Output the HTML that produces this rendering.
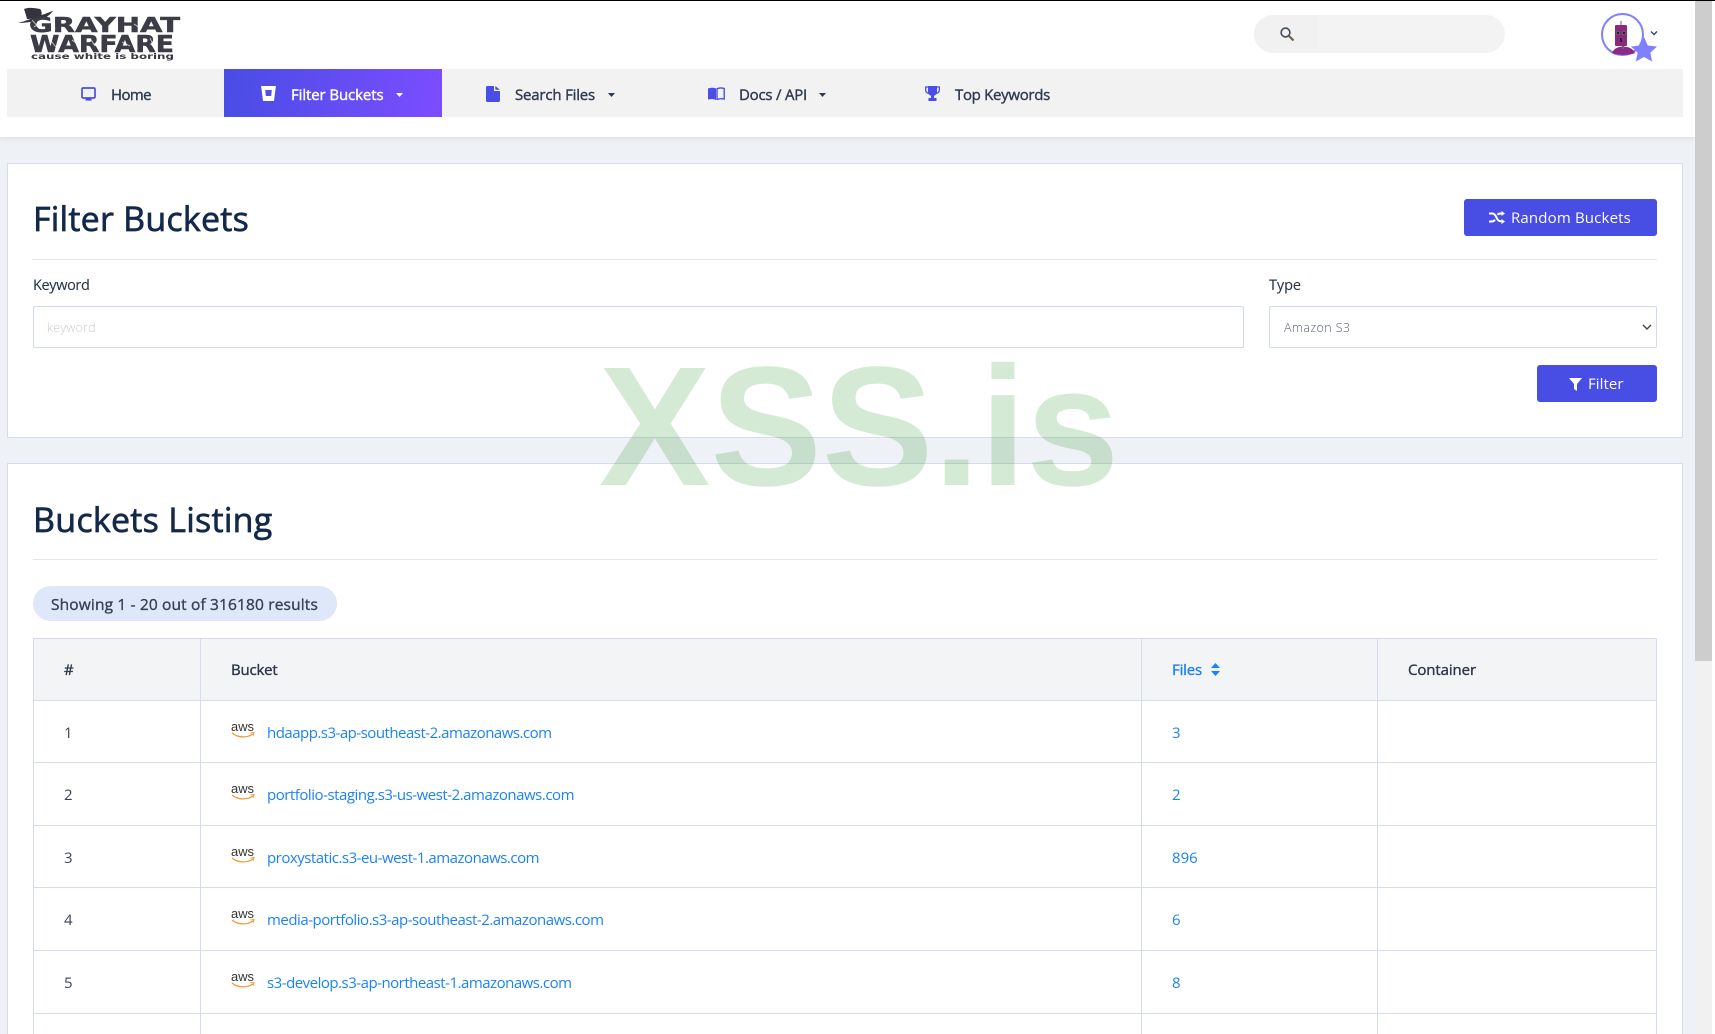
<!DOCTYPE html>
<html lang="en">
<head>
<meta charset="utf-8">
<title>Filter Buckets - GrayhatWarfare</title>
<style>
*{box-sizing:border-box}
html,body{margin:0;padding:0;width:1715px;height:1034px;overflow:hidden;background:#fff}
body{font-family:"Open Sans","Noto Sans CJK JP","Liberation Sans",sans-serif;color:#2f3a4f;position:relative}
#bg{position:absolute;left:0;top:0;width:1695px;height:1034px;background:#eef1f5}
#top{position:absolute;left:0;top:0;width:1695px;height:137px;background:#fff;box-shadow:0 1px 6px rgba(0,0,0,.09);border-top:1px solid #000}
#blk{position:absolute;left:0;top:0;width:1715px;height:1px;background:#000;z-index:5}
#track{position:absolute;left:1695px;top:0;width:17px;height:1034px;background:#f1f1f1}
#thumb{position:absolute;left:1695px;top:0;width:17px;height:661px;background:#cdcdcd}
.a{position:absolute;white-space:nowrap;line-height:20px}
#search{position:absolute;left:1254px;top:15px;width:251px;height:38px;border-radius:19px;background:#f3f3f3;overflow:hidden}
#search i{position:absolute;left:0;top:0;width:65px;height:38px;background:#f1f1f1}
#nav{position:absolute;left:7px;top:69px;width:1676px;height:48px;background:#f2f2f2}
#active{position:absolute;left:224px;top:69px;width:218px;height:48px;background:linear-gradient(100deg,#484de4,#7c4dff)}
.n{font-size:15px;color:#2f3a4f;top:85px;-webkit-text-stroke:.4px currentColor}
.card{position:absolute;left:7px;width:1676px;background:#fff;border:1px solid #d6dcea}
.h{font-size:34px;color:#14294a;line-height:40px;-webkit-text-stroke:.7px currentColor}
.rule{position:absolute;height:1px;background:#e3e6ec;left:33px;width:1624px}
.lbl{font-size:14.5px;color:#26344b;top:275.5px;-webkit-text-stroke:.1px currentColor}
.box{position:absolute;height:42px;top:306px;background:#fff;border:1px solid #d3daec;border-radius:2px;margin:0;padding:0 13px;font:300 12.5px "Open Sans","Noto Sans CJK JP",sans-serif;outline:0;color:#5a6270;appearance:none;-webkit-appearance:none}
input.box::placeholder{color:#c9ccd2;opacity:1}
.btn{position:absolute;background:#484de4;border-radius:3px;height:37px}
.bt{font-size:15px;color:#fff}
#pill{position:absolute;left:33px;top:586px;width:304px;height:35px;border-radius:18px;background:#dfe7fb}
table{position:absolute;left:33px;top:638px;width:1624px;table-layout:fixed;border-collapse:separate;border-spacing:0;border-top:1px solid #d5dcec;border-left:1px solid #d5dcec}
th,td{box-sizing:border-box;padding:0 0 0 30px;vertical-align:top;border-right:1px solid #d5dcec;border-bottom:1px solid #d5dcec;text-align:left;font-size:15px;line-height:20px;position:relative;white-space:nowrap}
th{background:#f3f4f6;font-weight:400;color:#2a3548;padding-top:21px;height:62px;-webkit-text-stroke:.35px currentColor}
td{background:#fff;padding-top:22px;color:#3a4456}
tr.h62 td{height:62px}
tr.h63 td{height:63px}
a{color:#1a82f7;text-decoration:none;display:inline-block}
td a.b{margin-left:36px;font-size:15px;margin-top:-.5px}
td svg{position:absolute;left:30px;top:21px}
#wm{position:absolute;left:599px;top:327px;font:700 170px/200px "Liberation Sans",Arial,sans-serif;color:rgba(0,128,0,.17);z-index:10;white-space:nowrap;pointer-events:none;transform:scaleX(.983);transform-origin:0 0}
svg{display:block}
.ic{position:absolute}
</style>
</head>
<body>
<div id="bg"></div>
<div id="top"></div>
<div id="blk"></div>
<div id="track"></div>
<div id="thumb"></div>

<!-- logo -->
<svg class="ic" style="left:0;top:0" width="200" height="66" viewBox="0 0 200 66">
  <path d="M18 23 C26 21 33 18 38 16 C46 14 52 11 53 11 C50 15 44 20 36 21 C30 22 24 23 18 23Z" fill="#34343e"/>
  <path d="M24 9 C29 7 35 8 40 9 C42 11 42 14 41 16 C36 18 31 19 27 19 C26 15 25 12 24 9Z" fill="#34343e"/>
  <text x="29" y="32" textLength="151" lengthAdjust="spacingAndGlyphs" font-family="'DejaVu Sans','Liberation Sans',sans-serif" font-weight="700" font-size="20.500" fill="#3c3c46" stroke="#3c3c46" stroke-width=".5">GRAYHAT</text>
  <text x="30" y="52" textLength="144" lengthAdjust="spacingAndGlyphs" font-family="'DejaVu Sans','Liberation Sans',sans-serif" font-weight="700" font-size="23" fill="#3c3c46" stroke="#3c3c46" stroke-width=".5">WARFARE</text>
  <text x="31" y="59" textLength="143" lengthAdjust="spacingAndGlyphs" font-family="'DejaVu Sans','Liberation Sans',sans-serif" font-weight="700" font-size="8" fill="#3a3a44">cause white is boring</text>
  <path d="M32 20l8 9M34 27l6-4M52 20l3 9M95 22l5 6M134 24l6 4M50 40l6 7M90 38l5 8M122 42l8 4M150 38l4 9M72 40l4 3" stroke="#fff" stroke-width=".9" opacity=".75"/>
</svg>

<div id="search"><i></i></div>
<svg class="ic" style="left:1279px;top:26px" width="16" height="16" viewBox="0 0 16 16"><circle cx="6.500" cy="6.500" r="4.400" fill="none" stroke="#444c5c" stroke-width="1.600"/><path d="M10 10l4.500 4.500" stroke="#6b5a4a" stroke-width="2"/></svg>

<!-- avatar -->
<svg class="ic" style="left:1598px;top:10px" width="70" height="56" viewBox="0 0 70 56">
  <circle cx="24.500" cy="24.500" r="20.500" fill="#fff" stroke="#8080ff" stroke-width="2"/>
  <path d="M14 43c2-5 7-6.500 11-6.500s10 1.500 12 6.500c-6 2.500-17 2.500-23 0Z" fill="#8a2a8a"/>
  <rect x="17" y="15" width="12" height="21" rx="1" fill="#8a2a7e"/>
  <path d="M23 11v4" stroke="#999" stroke-width="1.500"/>
  <path d="M25 36v3" stroke="#666" stroke-width="2"/>
  <circle cx="20" cy="23" r="1.700" fill="#222" stroke="#777" stroke-width=".7"/><circle cx="26" cy="23" r="1.700" fill="#222" stroke="#777" stroke-width=".7"/>
  <path d="M22.500 28l1 4" stroke="#111" stroke-width="1.400"/>
  <polygon points="46,27 49.800,35.500 59,36.500 52.300,42.800 54.200,51.500 46,47 37.800,51.500 39.700,42.800 33,36.500 42.200,35.500" fill="#8080ff"/>
</svg>
<svg class="ic" style="left:1650px;top:30px" width="8" height="6" viewBox="0 0 8 6"><path d="M1 1.500l3 3 3-3" fill="none" stroke="#2a4a70" stroke-width="1.400"/></svg>

<!-- nav -->
<div id="nav"></div>
<div id="active"></div>
<svg class="ic" style="left:81px;top:87px" width="15" height="14" viewBox="0 0 15 14"><rect x="1" y="1" width="13" height="10" rx="1.200" fill="none" stroke="#4a4de6" stroke-width="1.700"/><path d="M4.500 12.500h6" stroke="#4a4de6" stroke-width="2.200"/></svg>
<span class="a n" style="left:111px;--w:40">Home</span>
<svg class="ic" style="left:261px;top:86px" width="15" height="15" viewBox="0 0 15 15"><path fill-rule="evenodd" d="M0 0h15l-.5 3-1.500 12H2L.5 3ZM4.200 4l.6 6h5.400l.6-6Z" fill="#fff"/></svg>
<span class="a n" style="left:291px;--w:92.500;color:#fff">Filter Buckets</span>
<svg class="ic" style="left:396px;top:93px" width="7" height="4" viewBox="0 0 7 4"><path d="M0 0h7L3.500 4Z" fill="#fff"/></svg>
<svg class="ic" style="left:486px;top:86px" width="14" height="16" viewBox="0 0 14 16"><path d="M1.500 0H8v5h6v9.500a1.500 1.500 0 0 1-1.500 1.500h-11A1.500 1.500 0 0 1 0 14.500v-13A1.500 1.500 0 0 1 1.500 0ZM9.300 0 14 3.800H9.300Z" fill="#4a4de6"/></svg>
<span class="a n" style="left:515px;--w:80">Search Files</span>
<svg class="ic" style="left:607.500px;top:93px" width="7" height="4" viewBox="0 0 7 4"><path d="M0 0h7L3.500 4Z" fill="#2f3a4f"/></svg>
<svg class="ic" style="left:708px;top:87px" width="17" height="13" viewBox="0 0 17 13"><path d="M0 1.500C3 .500 6 .500 8 1.500V13C6 12 3 12 0 12.500Z" fill="#4a4de6"/><path d="M9 1.800C11 .800 14 .800 16.200 1.500V12C14 11.500 11 11.700 9 12.700Z" fill="none" stroke="#4a4de6" stroke-width="1.400"/></svg>
<span class="a n" style="left:739px;--w:68">Docs / API</span>
<svg class="ic" style="left:818.500px;top:93px" width="7" height="4" viewBox="0 0 7 4"><path d="M0 0h7L3.500 4Z" fill="#2f3a4f"/></svg>
<svg class="ic" style="left:925px;top:86px" width="15" height="15" viewBox="0 0 15 15"><path d="M3 0h9v6c0 2-1.500 3.300-3 3.700V12h2.500v3h-8v-3H6V9.700C4.500 9.300 3 8 3 6Z" fill="#4a4de6"/><path d="M3 1H.7v3c0 1.800 1.300 3 2.900 3.300M12 1h2.300v3c0 1.800-1.300 3-2.900 3.300" fill="none" stroke="#4a4de6" stroke-width="1.300"/></svg>
<span class="a n" style="left:955px;--w:95">Top Keywords</span>

<!-- filter card -->
<div class="card" style="top:163px;height:275px"></div>
<div class="a h" style="left:33px;top:198px;--w:216">Filter Buckets</div>
<div class="btn" style="left:1464px;top:199px;width:193px"></div>
<svg class="ic" style="left:1489px;top:211px" width="16" height="13" viewBox="0 0 16 13"><path d="M0 2.500h3c1.800 0 2.800 1 3.700 2.500l1.600 3c.8 1.400 1.600 2.200 3.200 2.200h1.500M0 10.500h3c1.500 0 2.300-.8 3-1.800M8.500 3.800c.7-.9 1.600-1.300 3-1.300h1.500" fill="none" stroke="#fff" stroke-width="2"/><path d="M12.500 0 16 2.500 12.500 5ZM12.500 8 16 10.500 12.500 13Z" fill="#fff"/></svg>
<span class="a bt" style="left:1511px;top:207.500px;--w:120">Random Buckets</span>
<div class="rule" style="top:259px"></div>
<span class="a lbl" style="left:33px;--w:56.500">Keyword</span>
<input class="box" style="left:33px;width:1211px;letter-spacing:.2px" placeholder="keyword" type="text">
<span class="a lbl" style="left:1269px;--w:32">Type</span>
<select class="box" style="left:1269px;width:388px;letter-spacing:.4px;padding-left:14px"><option>Amazon S3</option></select>
<svg class="ic" style="left:1642px;top:324px" width="10" height="7" viewBox="0 0 10 7"><path d="M1 1l4 4 4-4" fill="none" stroke="#444" stroke-width="1.400"/></svg>
<div class="btn" style="left:1537px;top:365px;width:120px"></div>
<svg class="ic" style="left:1569px;top:378px" width="13" height="13" viewBox="0 0 13 13"><path d="M0 0h13L8 6v7L5 11V6Z" fill="#fff"/></svg>
<span class="a bt" style="left:1588px;top:373.500px;--w:35.500">Filter</span>

<!-- listing card -->
<div class="card" style="top:463px;height:600px"></div>
<div class="a h" style="left:33px;top:499px;--w:239.500">Buckets Listing</div>
<div class="rule" style="top:559px"></div>
<div id="pill"></div>
<span class="a" style="left:51px;top:594px;font-size:15.500px;color:#37414f;-webkit-text-stroke:.35px currentColor;--w:267">Showing 1 - 20 out of 316180 results</span>

<table>
<colgroup><col style="width:167px"><col style="width:941px"><col style="width:236px"><col style="width:279px"></colgroup>
<tr><th>#</th><th><span class="f" style="--w:46.500">Bucket</span></th><th><a class="f" style="--w:30">Files</a><svg class="ic" style="left:69px;top:24px" width="9" height="13" viewBox="0 0 9 13"><path d="M4.500 0 9 5H0ZM0 8h9l-4.500 5Z" fill="#1a82f7"/></svg></th><th><span class="f" style="--w:68">Container</span></th></tr>
<tr class="h62"><td>1</td><td><svg width="24" height="16" viewBox="0 0 24 16"><text x="0" y="9" font-family="'Liberation Sans',sans-serif" font-size="12.500" fill="#333" textLength="23" lengthAdjust="spacingAndGlyphs">aws</text><path d="M1 11c6 5 15 5 21 1" fill="none" stroke="#ef9a3a" stroke-width="1.300"/><path d="M19.500 11l3.500-.5-1 3.200" fill="none" stroke="#ef9a3a" stroke-width="1"/></svg><a class="b" style="--w:284.500">hdaapp.s3-ap-southeast-2.amazonaws.com</a></td><td><a>3</a></td><td></td></tr>
<tr class="h63"><td>2</td><td><svg width="24" height="16" viewBox="0 0 24 16"><text x="0" y="9" font-family="'Liberation Sans',sans-serif" font-size="12.500" fill="#333" textLength="23" lengthAdjust="spacingAndGlyphs">aws</text><path d="M1 11c6 5 15 5 21 1" fill="none" stroke="#ef9a3a" stroke-width="1.300"/><path d="M19.500 11l3.500-.5-1 3.200" fill="none" stroke="#ef9a3a" stroke-width="1"/></svg><a class="b" style="--w:307">portfolio-staging.s3-us-west-2.amazonaws.com</a></td><td><a>2</a></td><td></td></tr>
<tr class="h62"><td>3</td><td><svg width="24" height="16" viewBox="0 0 24 16"><text x="0" y="9" font-family="'Liberation Sans',sans-serif" font-size="12.500" fill="#333" textLength="23" lengthAdjust="spacingAndGlyphs">aws</text><path d="M1 11c6 5 15 5 21 1" fill="none" stroke="#ef9a3a" stroke-width="1.300"/><path d="M19.500 11l3.500-.5-1 3.200" fill="none" stroke="#ef9a3a" stroke-width="1"/></svg><a class="b" style="--w:272">proxystatic.s3-eu-west-1.amazonaws.com</a></td><td><a>896</a></td><td></td></tr>
<tr class="h63"><td>4</td><td><svg width="24" height="16" viewBox="0 0 24 16"><text x="0" y="9" font-family="'Liberation Sans',sans-serif" font-size="12.500" fill="#333" textLength="23" lengthAdjust="spacingAndGlyphs">aws</text><path d="M1 11c6 5 15 5 21 1" fill="none" stroke="#ef9a3a" stroke-width="1.300"/><path d="M19.500 11l3.500-.5-1 3.200" fill="none" stroke="#ef9a3a" stroke-width="1"/></svg><a class="b" style="--w:336.500">media-portfolio.s3-ap-southeast-2.amazonaws.com</a></td><td><a>6</a></td><td></td></tr>
<tr class="h63"><td>5</td><td><svg width="24" height="16" viewBox="0 0 24 16"><text x="0" y="9" font-family="'Liberation Sans',sans-serif" font-size="12.500" fill="#333" textLength="23" lengthAdjust="spacingAndGlyphs">aws</text><path d="M1 11c6 5 15 5 21 1" fill="none" stroke="#ef9a3a" stroke-width="1.300"/><path d="M19.500 11l3.500-.5-1 3.200" fill="none" stroke="#ef9a3a" stroke-width="1"/></svg><a class="b" style="--w:304.500">s3-develop.s3-ap-northeast-1.amazonaws.com</a></td><td><a>8</a></td><td></td></tr>
<tr class="h63"><td>6</td><td></td><td></td><td></td></tr>
</table>

<div id="wm">XSS.is</div>

<script>
document.querySelectorAll('span,a,div').forEach(function(e){
  var w=parseFloat(e.style.getPropertyValue('--w'));
  if(!w)return;
  if(getComputedStyle(e).display==='inline')e.style.display='inline-block';
  var c=e.getBoundingClientRect().width,n=e.textContent.length;
  e.style.letterSpacing=((w-c)/n)+'px';
});
</script>
</body>
</html>
